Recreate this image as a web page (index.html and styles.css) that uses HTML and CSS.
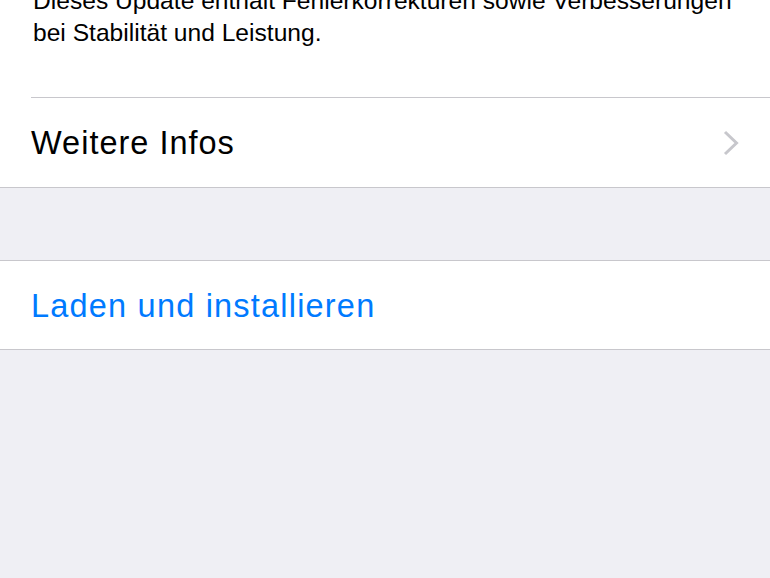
FILE: index.html
```html
<!DOCTYPE html>
<html lang="de">
<head>
<meta charset="utf-8">
<title>Softwareupdate</title>
<link rel="stylesheet" href="styles.css">
</head>
<body>
<div class="screen">
  <section class="group first">
    <p class="notes">Dieses Update enthält Fehlerkorrekturen sowie Verbesserungen bei Stabilität und Leistung.</p>
    <div class="row link-row">
      <span class="label">Weitere Infos</span>
      <svg class="chevron" width="16" height="26" viewBox="0 0 16 26" aria-hidden="true">
        <path d="M2 2 L13.5 13 L2 24" fill="none" stroke="#c7c7cc" stroke-width="3"/>
      </svg>
    </div>
  </section>
  <section class="group">
    <div class="row action-row">
      <span class="action">Laden und installieren</span>
    </div>
  </section>
</div>
</body>
</html>
```
FILE: styles.css
```css
html, body {
  margin: 0;
  padding: 0;
  background: #efeff4;
  font-family: "Liberation Sans", Arial, sans-serif;
  overflow: hidden;
}
.screen {
  width: 770px;
  height: 578px;
  background: #efeff4;
  display: flex;
  flex-direction: column;
  gap: 72px;
}
.group {
  background: #fff;
  border-bottom: 1px solid #c8c7cc;
}
.group + .group {
  border-top: 1px solid #c8c7cc;
}
.notes {
  margin: -15px 0 0 0;
  padding: 0 30px 0 33px;
  font-size: 24.6px;
  line-height: 32px;
  color: #000;
  box-sizing: border-box;
  width: 770px;
}
.first .notes {
  height: 112px;
}
.link-row {
  margin-left: 31px;
  border-top: 1px solid #c8c7cc;
  height: 89px;
  display: flex;
  align-items: center;
  justify-content: space-between;
  padding-right: 31px;
}
.label {
  font-size: 32.5px;
  letter-spacing: 1px;
  color: #000;
  padding-top: 2px;
}
.chevron {
  display: block;
  margin-top: 1px;
}
.action-row {
  height: 88px;
  display: flex;
  align-items: center;
  padding-left: 31px;
}
.action {
  font-size: 32.5px;
  letter-spacing: 1.2px;
  color: #007aff;
  padding-top: 2px;
}
```
